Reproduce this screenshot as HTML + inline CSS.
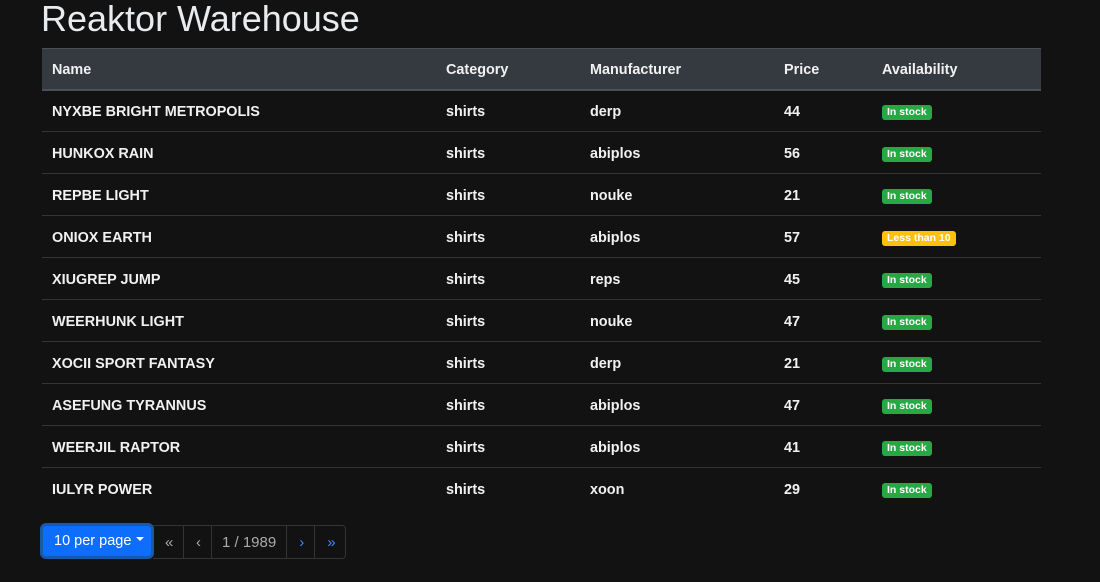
<!DOCTYPE html>
<html><head><style>
body{margin:0;background:#121212;width:1100px;height:582px;overflow:hidden;font-family:"Liberation Sans",Arial,sans-serif;color:#dee2e6;position:relative}
h1{position:absolute;left:41px;top:-4px;margin:0;font-size:36px;font-weight:400;color:#e9ecef;line-height:46px}
table{position:absolute;left:42px;top:48px;width:999px;border-collapse:collapse;font-size:14.4px;font-weight:bold;color:#f1f1f1}
th{background:#343a40;height:41px;box-sizing:border-box;text-align:left;padding:2px 10px 0;border-top:1px solid #4a5058;border-bottom:2px solid #4a5058;font-weight:bold}
td{height:42px;box-sizing:border-box;padding:2px 10px 0;border-bottom:1px solid #343434}
tr:last-child td{border-bottom:none}
.b{display:inline-block;font-size:10.5px;font-weight:bold;padding:2px 5px;border-radius:3px;color:#fff;background:#28a745;line-height:11px}
.y{background:#ffc107}
.pg{position:absolute;top:525px;left:153px;height:34px;display:flex;font-size:15px}
.pg div{border:1px solid #343434;border-left:none;display:flex;align-items:center;padding:0 12px;color:#aaa}
.btn{position:absolute;left:40px;top:523px;width:114px;height:36px;box-sizing:border-box;background:#0d6efd;border:3px solid #1a58a8;border-radius:6px;color:#fff;font-size:14.5px;display:flex;align-items:center;padding-left:11px}
.btn:after{content:"";border-top:4px solid #fff;border-left:4px solid transparent;border-right:4px solid transparent;margin-left:5px;margin-top:-4px}
</style></head><body>
<h1>Reaktor Warehouse</h1>
<table>
<tr><th style="width:394px">Name</th><th style="width:144px">Category</th><th style="width:194px">Manufacturer</th><th style="width:98px">Price</th><th>Availability</th></tr>
<tr><td>NYXBE BRIGHT METROPOLIS</td><td>shirts</td><td>derp</td><td>44</td><td><span class="b">In stock</span></td></tr>
<tr><td>HUNKOX RAIN</td><td>shirts</td><td>abiplos</td><td>56</td><td><span class="b">In stock</span></td></tr>
<tr><td>REPBE LIGHT</td><td>shirts</td><td>nouke</td><td>21</td><td><span class="b">In stock</span></td></tr>
<tr><td>ONIOX EARTH</td><td>shirts</td><td>abiplos</td><td>57</td><td><span class="b y">Less than 10</span></td></tr>
<tr><td>XIUGREP JUMP</td><td>shirts</td><td>reps</td><td>45</td><td><span class="b">In stock</span></td></tr>
<tr><td>WEERHUNK LIGHT</td><td>shirts</td><td>nouke</td><td>47</td><td><span class="b">In stock</span></td></tr>
<tr><td>XOCII SPORT FANTASY</td><td>shirts</td><td>derp</td><td>21</td><td><span class="b">In stock</span></td></tr>
<tr><td>ASEFUNG TYRANNUS</td><td>shirts</td><td>abiplos</td><td>47</td><td><span class="b">In stock</span></td></tr>
<tr><td>WEERJIL RAPTOR</td><td>shirts</td><td>abiplos</td><td>41</td><td><span class="b">In stock</span></td></tr>
<tr><td>IULYR POWER</td><td>shirts</td><td>xoon</td><td>29</td><td><span class="b">In stock</span></td></tr>
</table>
<div class="pg"><div style="width:6px">«</div><div style="width:3px">‹</div><div style="padding:0 10px">1 / 1989</div><div style="width:3px;color:#3d8bfd">›</div><div style="width:6px;color:#3d8bfd;border-radius:0 4px 4px 0">»</div></div>
<div class="btn">10 per page</div>
</body></html>
